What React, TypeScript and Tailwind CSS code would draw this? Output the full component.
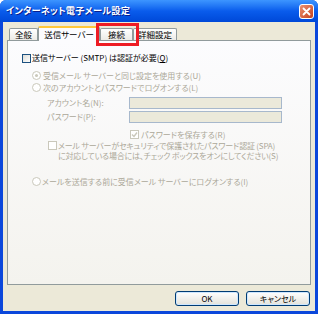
import React from "react"

const jp = "font-['Noto_Sans_CJK_JP',sans-serif] [font-feature-settings:'palt']"

function CheckBox({ enabled = false, checked = false }: { enabled?: boolean; checked?: boolean }) {
  return (
    <span
      className={`flex h-[9px] w-[9px] shrink-0 items-center justify-center border ${
        enabled ? "border-[#1c5180] bg-gradient-to-br from-[#dcdcd7] to-white" : "border-[#cac8bb] bg-white"
      }`}
    >
      {checked && (
        <svg width="7" height="7" viewBox="0 0 7 7">
          <path d="M1 3.5 L3 5.5 L6 1.5" fill="none" stroke="#cac8bb" strokeWidth="1.4" />
        </svg>
      )}
    </span>
  )
}

function Radio({ checked = false }: { checked?: boolean }) {
  return (
    <span className="flex h-[9px] w-[9px] shrink-0 items-center justify-center rounded-full border border-[#cac8bb] bg-white">
      {checked && <span className="h-[3px] w-[3px] rounded-full bg-[#cac8bb]" />}
    </span>
  )
}

function Tab({ label, w, selected = false }: { label: string; w: string; selected?: boolean }) {
  if (selected) {
    return (
      <div
        className={`${w} flex h-[15px] items-center justify-center rounded-t-[2px] border-x border-t-2 border-x-[#919b9c] border-t-[#ffc83c] bg-[#fcfcfe] text-[8.5px] text-black`}
      >
        {label}
      </div>
    )
  }
  return (
    <div
      className={`${w} mb-[1px] flex h-[12px] items-center justify-center rounded-t-[2px] border-x border-t border-[#919b9c] bg-gradient-to-b from-white to-[#ecebe6] text-[8.5px] text-black`}
    >
      {label}
    </div>
  )
}

function Button({ label }: { label: string }) {
  return (
    <button className="flex h-[15px] w-[64px] items-center justify-center rounded-[3px] border border-[#003c74] bg-gradient-to-b from-white to-[#e3e2da] text-[8px] text-black shadow-[inset_0_0_0_1px_#cee7ff]">
      {label}
    </button>
  )
}

export default function App() {
  const dis = "text-[#aca899]"
  return (
    <div className={`relative flex h-[314px] w-[318px] flex-col overflow-hidden rounded-t-[6px] bg-[#0b47db] ${jp}`}>
      {/* title bar */}
      <div className="flex h-[22px] shrink-0 items-center justify-between bg-gradient-to-b from-[#3d95ff] via-[#0a5cec] to-[#0048d8] pl-[6px] pr-[4px]">
        <span className="text-[9.2px] font-bold tracking-[0.2px] text-white [text-shadow:1px_1px_0_#0a1e8c]">
          インターネット電子メール設定
        </span>
        <span className="flex h-[15px] w-[15px] items-center justify-center rounded-[3px] border border-white bg-gradient-to-br from-[#e98f6f] to-[#c5401a]">
          <svg width="9" height="9" viewBox="0 0 9 9">
            <path d="M1.5 1.5 L7.5 7.5 M7.5 1.5 L1.5 7.5" stroke="white" strokeWidth="1.8" strokeLinecap="round" />
          </svg>
        </span>
      </div>

      {/* body */}
      <div className="mx-[3px] mb-[3px] flex flex-1 flex-col bg-[#ece9d8] px-[4px] pt-[4px]">
        <div className="relative z-10 mb-[-1px] ml-[2px] flex h-[15px] items-end">
          <Tab label="全般" w="w-[29px]" />
          <Tab label="送信サーバー" w="w-[62px]" selected />
          <Tab label="接続" w="w-[33px]" />
          <Tab label="詳細設定" w="w-[44px]" />
        </div>

        <div className="flex h-[245px] flex-col border border-[#919b9c] bg-gradient-to-b from-[#fcfcfe] to-[#f4f3ee] pl-[14px] pt-[12px] text-[8px] leading-none">
          <div className="flex h-[10px] items-center gap-[1px]">
            <CheckBox enabled />
            <span className="text-black">送信サーバー (SMTP) は認証が必要(<span className="underline">Q</span>)</span>
          </div>

          <div className="ml-[10px] mt-[8px] flex h-[9px] items-center gap-[2px]">
            <Radio checked />
            <span className={dis}>受信メール サーバーと同じ設定を使用する(U)</span>
          </div>

          <div className="ml-[10px] mt-[3px] flex h-[9px] items-center gap-[2px]">
            <Radio />
            <span className={dis}>次のアカウントとパスワードでログオンする(L)</span>
          </div>

          <div className="ml-[25px] mt-[5px] flex h-[12px] items-center">
            <span className={`w-[82px] ${dis}`}>アカウント名(N):</span>
            <span className="h-[12px] w-[153px] border border-[#a7b8cc] bg-[#ebe9da]" />
          </div>

          <div className="ml-[25px] mt-[2px] flex h-[12px] items-center">
            <span className={`w-[82px] ${dis}`}>パスワード(P):</span>
            <span className="h-[12px] w-[153px] border border-[#a7b8cc] bg-[#ebe9da]" />
          </div>

          <div className="ml-[108px] mt-[7px] flex h-[9px] items-center gap-[2px]">
            <CheckBox checked />
            <span className={dis}>パスワードを保存する(R)</span>
          </div>

          <div className="ml-[26px] mt-[2px] flex items-start gap-[1px]">
            <CheckBox />
            <div className={`flex flex-col whitespace-nowrap leading-[9.5px] ${dis}`}>
              <span className="tracking-[-0.2px]">メール サーバーがセキュリティで保護されたパスワード認証 (SPA)</span>
              <span className="tracking-[-0.2px]">に対応している場合には、チェック ボックスをオンにしてください(S)</span>
            </div>
          </div>

          <div className="ml-[10px] mt-[17px] flex h-[9px] items-center gap-[1px]">
            <Radio />
            <span className={dis}>メールを送信する前に受信メール サーバーにログオンする(I)</span>
          </div>
        </div>

        <div className="mr-[1px] mt-[6px] flex justify-end gap-[7px]">
          <Button label="OK" />
          <Button label="キャンセル" />
        </div>
      </div>

      {/* annotation box */}
      <div className="absolute left-[96px] top-[23px] z-20 h-[23px] w-[43px] border-[3px] border-[#ee1c24]" />
    </div>
  )
}
